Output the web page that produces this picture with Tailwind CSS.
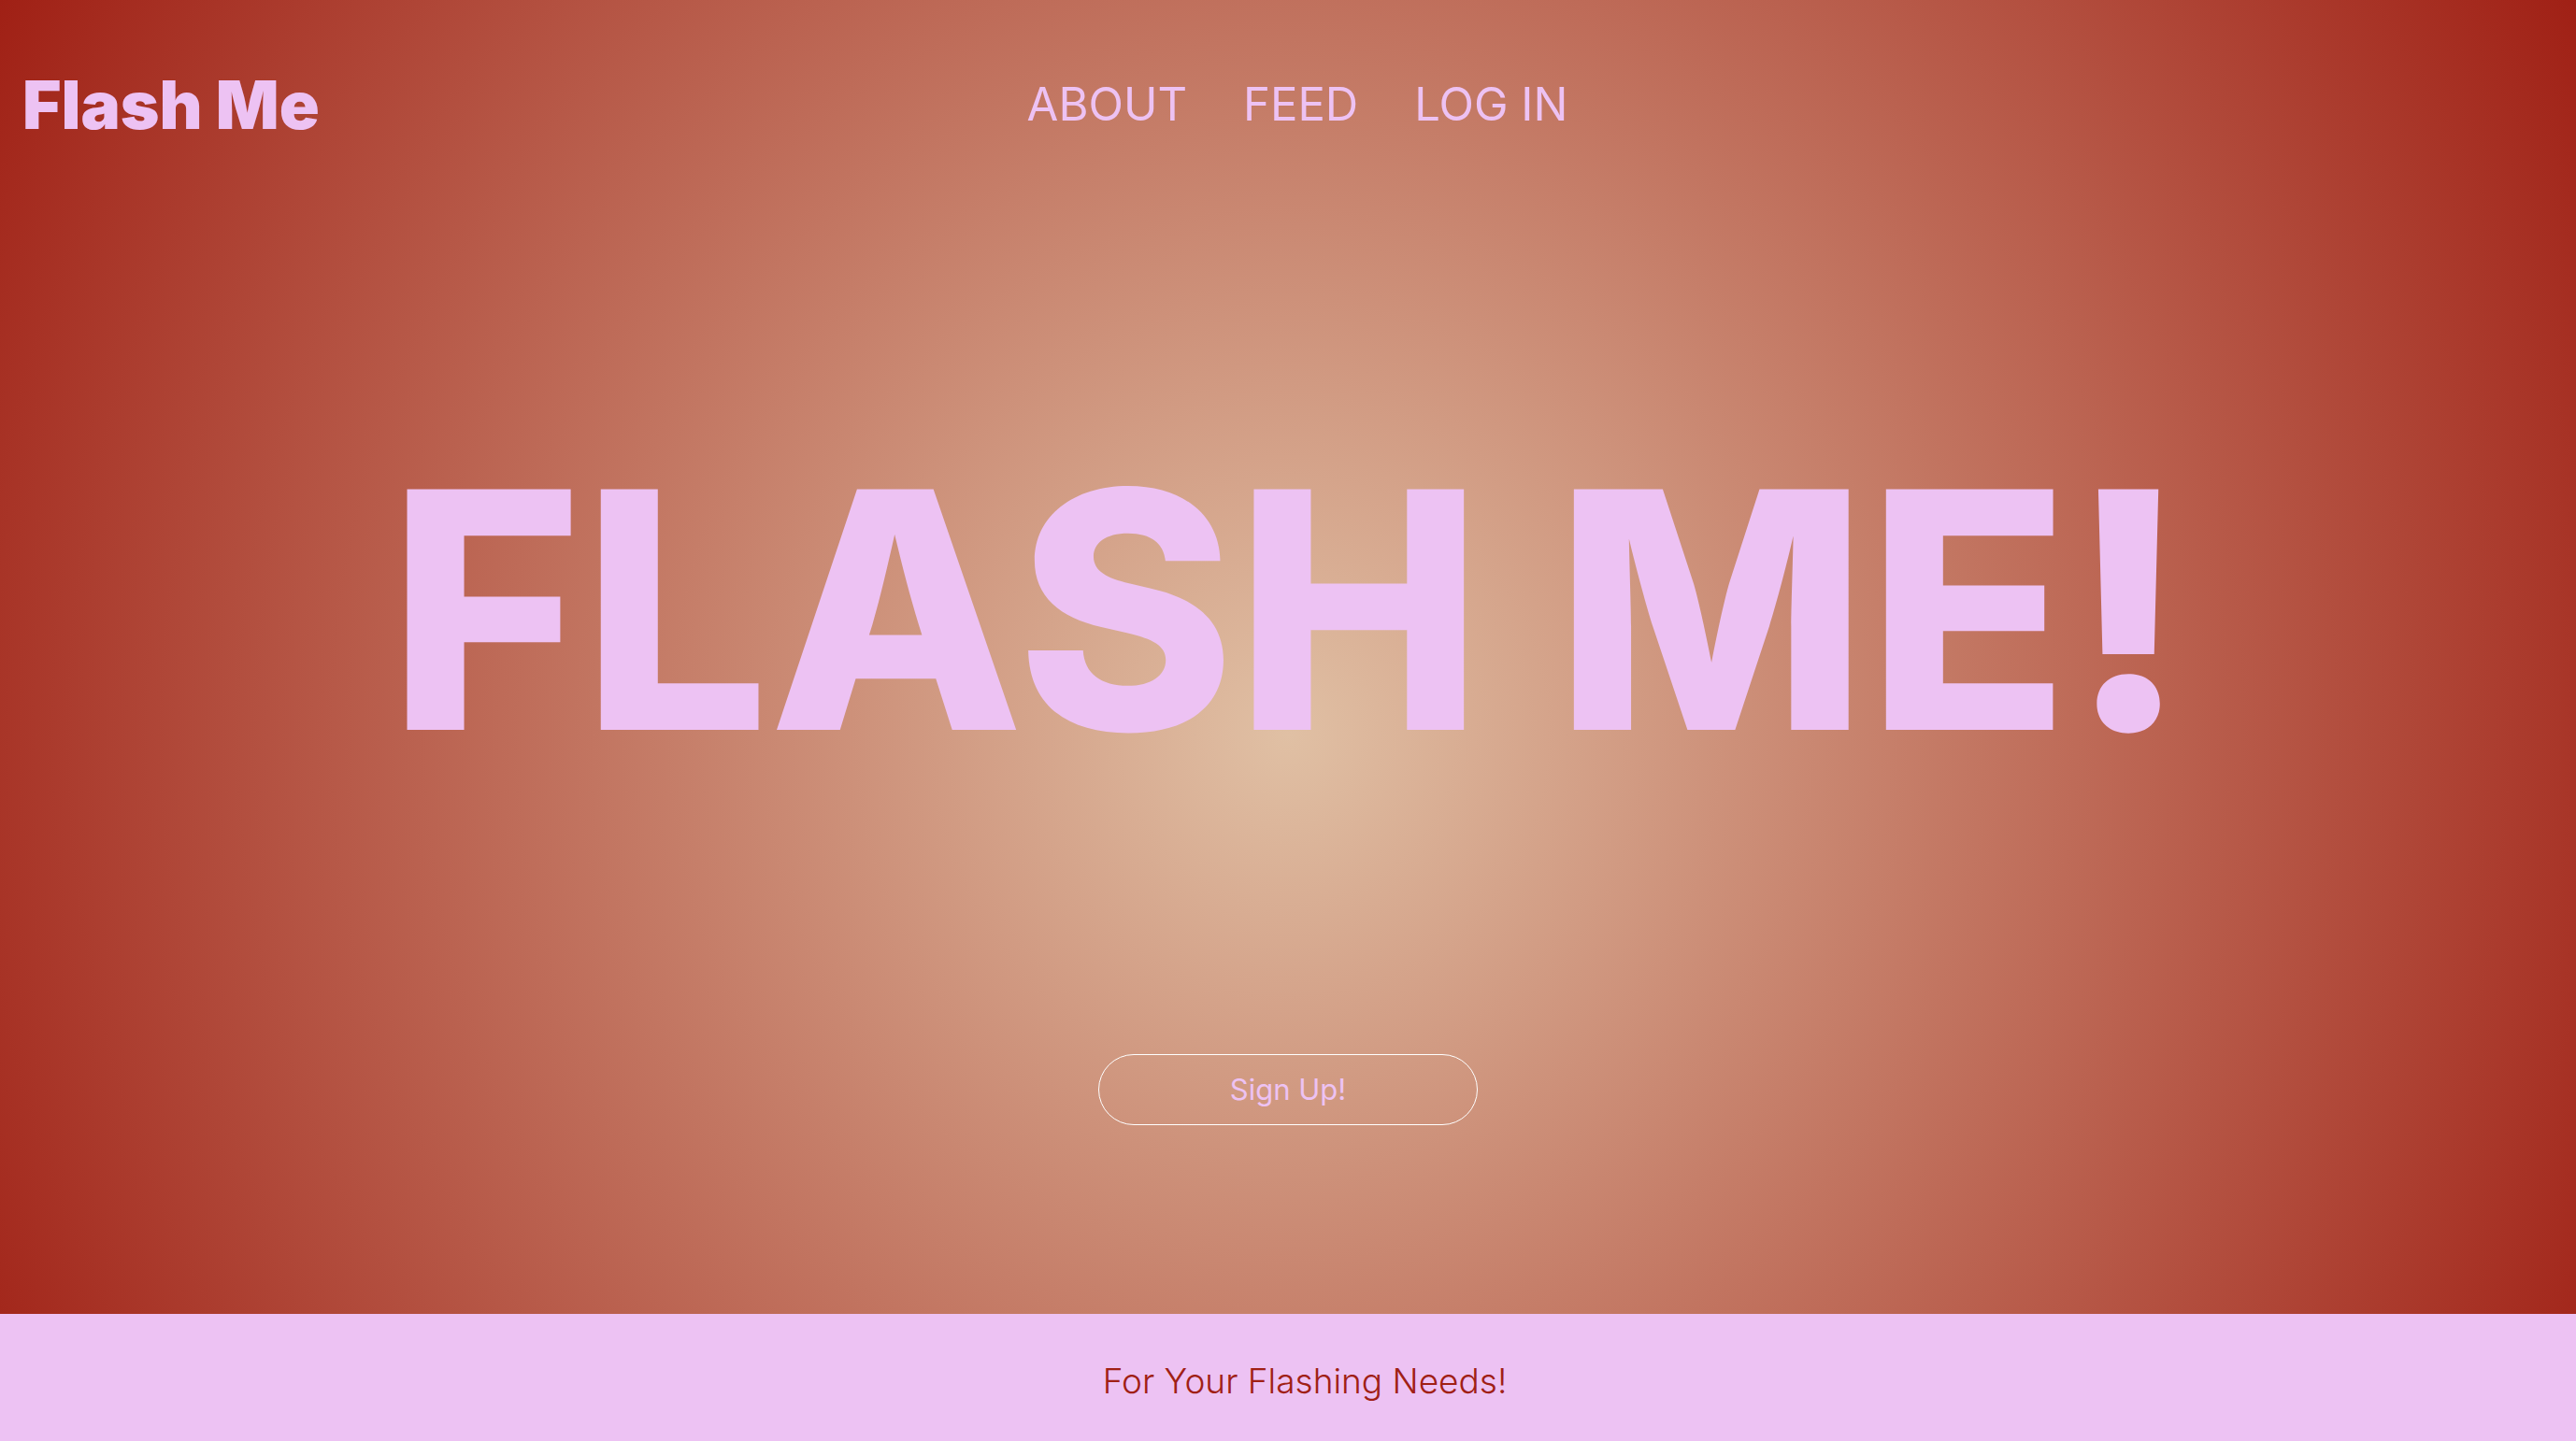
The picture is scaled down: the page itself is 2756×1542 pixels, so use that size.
<!DOCTYPE html>
<html lang="en">
<head>
<meta charset="utf-8">
<title>Flash Me</title>
<script src="https://cdn.jsdelivr.net/npm/@tailwindcss/browser@4"></script>
</head>
<body class="min-h-screen flex flex-col font-['Inter',sans-serif] text-[#edc2f3] bg-[radial-gradient(circle_at_50%_51%,#e0c0a4,#a02015)]">
<header class="grid grid-cols-[1fr_auto_1fr] items-center px-6 pt-20">
<a href="#" class="text-[71px] leading-16 font-black">Flash Me</a>
<nav class="flex gap-15 pl-5 text-[49px] leading-16">
<a href="#">ABOUT</a><a href="#">FEED</a><a href="#">LOG IN</a>
</nav>
</header>
<main class="flex-1 flex flex-col items-center">
<h1 class="mt-87 text-[354px] leading-[320px] font-extrabold whitespace-nowrap">FLASH ME!</h1>
<button class="mt-79 h-19 w-[406px] rounded-full border border-white text-[31px]">Sign Up!</button>
</main>
<footer class="h-34 flex items-center justify-center pt-2 pl-9 bg-[#edc2f3] text-[#a02015] text-[37px] font-light"><p>For Your Flashing Needs!</p></footer>
</body>
</html>
